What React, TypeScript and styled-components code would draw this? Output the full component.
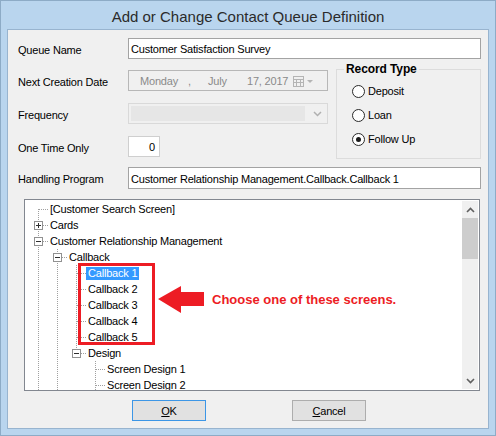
import styled, { createGlobalStyle } from "styled-components";

const GlobalStyle = createGlobalStyle`
  html, body {
    margin: 0;
    padding: 0;
    background: #b9d5ee;
  }
  body {
    font-family: "Liberation Sans", Arial, sans-serif;
    font-size: 11px;
    letter-spacing: -0.2px;
    color: #000;
  }
`;

type TreeNode = {
  label: string;
  depth: number;
  guides: boolean[];
  expander?: "+" | "-";
  first?: boolean;
  last?: boolean;
  selected?: boolean;
};

const treeRows: TreeNode[] = [
  { label: "[Customer Search Screen]", depth: 0, guides: [], first: true },
  { label: "Cards", depth: 0, guides: [], expander: "+" },
  { label: "Customer Relationship Management", depth: 0, guides: [], expander: "-" },
  { label: "Callback", depth: 1, guides: [true], expander: "-" },
  { label: "Callback 1", depth: 2, guides: [true, true], selected: true },
  { label: "Callback 2", depth: 2, guides: [true, true] },
  { label: "Callback 3", depth: 2, guides: [true, true] },
  { label: "Callback 4", depth: 2, guides: [true, true] },
  { label: "Callback 5", depth: 2, guides: [true, true] },
  { label: "Design", depth: 2, guides: [true, true], expander: "-", last: true },
  { label: "Screen Design 1", depth: 3, guides: [true, true, false] },
  { label: "Screen Design 2", depth: 3, guides: [true, true, false] },
];

const DOT = "#a0a0a0";

const Guide = ({ on }: { on: boolean }) => (
  <Cell width="19" height="16">
    {on && (
      <line x1="9.5" y1="0" x2="9.5" y2="16" stroke={DOT} strokeDasharray="1 1" shapeRendering="crispEdges" />
    )}
  </Cell>
);

const Connector = ({ node }: { node: TreeNode }) => (
  <Cell width="19" height="16">
    <line
      x1="9.5"
      y1={node.first ? 8 : 0}
      x2="9.5"
      y2={node.last ? 8 : 16}
      stroke={DOT}
      strokeDasharray="1 1"
      shapeRendering="crispEdges"
    />
    <line
      x1={node.expander ? 14 : 10}
      y1="8.5"
      x2="19"
      y2="8.5"
      stroke={DOT}
      strokeDasharray="1 1"
      shapeRendering="crispEdges"
    />
    {node.expander && (
      <g shapeRendering="crispEdges">
        <rect x="5.5" y="4.5" width="8" height="8" fill="#fff" stroke="#919191" />
        <line x1="7" y1="8.5" x2="12" y2="8.5" stroke="#2f2f2f" />
        {node.expander === "+" && <line x1="9.5" y1="6" x2="9.5" y2="11" stroke="#2f2f2f" />}
      </g>
    )}
  </Cell>
);

const Chevron = ({ up }: { up?: boolean }) => (
  <svg width="9" height="6" viewBox="0 0 9 6">
    <path d={up ? "M1 5 L4.5 1.5 L8 5" : "M1 1 L4.5 4.5 L8 1"} fill="none" stroke="#606060" strokeWidth="1.6" />
  </svg>
);

const App = () => {
  return (
    <>
      <GlobalStyle />
      <Window>
        <TitleBar>Add or Change Contact Queue Definition</TitleBar>
        <Client>
          <FieldRow>
            <Label>Queue Name</Label>
            <TextBox>Customer Satisfaction Survey</TextBox>
          </FieldRow>

          <Middle>
            <LeftColumn>
              <FieldRow>
                <Label>Next Creation Date</Label>
                <DateBox>
                  <DateSeg $w={48}>Monday</DateSeg>
                  <DateSeg $w={20}>,</DateSeg>
                  <DateSeg $w={39}>July</DateSeg>
                  <DateSeg $w={46}>17, 2017</DateSeg>
                  <svg width="22" height="11" viewBox="0 0 22 11">
                    <g fill="none" stroke="#b4b4b4" shapeRendering="crispEdges">
                      <rect x="0.5" y="0.5" width="10" height="10" />
                      <line x1="0" y1="3.5" x2="11" y2="3.5" />
                      <line x1="0" y1="6.5" x2="11" y2="6.5" />
                      <line x1="3.5" y1="3" x2="3.5" y2="11" />
                      <line x1="7.5" y1="3" x2="7.5" y2="11" />
                    </g>
                    <path d="M14 4 L20 4 L17 7 Z" fill="#b4b4b4" />
                  </svg>
                </DateBox>
              </FieldRow>
              <FieldRow>
                <Label>Frequency</Label>
                <ComboBox>
                  <ComboFill />
                  <svg width="9" height="6" viewBox="0 0 9 6">
                    <path d="M1 1 L4.5 4.5 L8 1" fill="none" stroke="#b0b0b0" strokeWidth="1.5" />
                  </svg>
                </ComboBox>
              </FieldRow>
              <FieldRow>
                <Label>One Time Only</Label>
                <NumberBox>0</NumberBox>
              </FieldRow>
            </LeftColumn>

            <GroupBox>
              <GroupTitle>Record Type</GroupTitle>
              <RadioList>
                <RadioRow>
                  <RadioCircle />
                  Deposit
                </RadioRow>
                <RadioRow>
                  <RadioCircle />
                  Loan
                </RadioRow>
                <RadioRow>
                  <RadioCircle $checked />
                  Follow Up
                </RadioRow>
              </RadioList>
            </GroupBox>
          </Middle>

          <HandlingRow>
            <Label>Handling Program</Label>
            <TextBox>Customer Relationship Management.Callback.Callback 1</TextBox>
          </HandlingRow>

          <Tree>
            <TreeList>
              {treeRows.map((node) => (
                <TreeRow key={node.label}>
                  {node.guides.map((on, i) => (
                    <Guide key={i} on={on} />
                  ))}
                  <Connector node={node} />
                  <NodeLabel $selected={node.selected}>{node.label}</NodeLabel>
                </TreeRow>
              ))}
            </TreeList>
            <ScrollBar>
              <ScrollArrow>
                <Chevron up />
              </ScrollArrow>
              <ScrollThumb />
              <ScrollTrack />
              <ScrollArrow>
                <Chevron />
              </ScrollArrow>
            </ScrollBar>

            <HighlightBox />
            <Callout>
              <svg width="46" height="27" viewBox="0 0 46 27">
                <path d="M0 13 L23 0 L23 6 L46 6 L46 20 L23 20 L23 27 Z" fill="#ed1c24" />
              </svg>
              <CalloutText>Choose one of these screens.</CalloutText>
            </Callout>
          </Tree>

          <ButtonBar>
            <Button $default>
              <u>O</u>K
            </Button>
            <Button>
              <u>C</u>ancel
            </Button>
          </ButtonBar>
        </Client>
      </Window>
    </>
  );
};

export default App;

const Window = styled.div`
  width: 496px;
  height: 436px;
  box-sizing: border-box;
  border: 1px solid #8dabc6;
  background: #b9d5ee;
  padding: 0 6px 6px;
  display: flex;
  flex-direction: column;
`;

const TitleBar = styled.div`
  height: 28px;
  display: flex;
  align-items: center;
  justify-content: center;
  padding-top: 2px;
  box-sizing: border-box;
  font-size: 15px;
  letter-spacing: 0;
  color: #2b2b2b;
`;

const Client = styled.div`
  flex: 1;
  border: 1px solid #98b4cf;
  background: #f0f0f0;
  padding: 8px 7px 0 10px;
  display: flex;
  flex-direction: column;
`;

const FieldRow = styled.div`
  display: grid;
  grid-template-columns: 110px 1fr;
  align-items: center;
  height: 21px;
`;

const HandlingRow = styled(FieldRow)`
  margin-top: 8px;
  height: 22px;
`;

const Label = styled.span`
  white-space: nowrap;
  padding-top: 2px;
`;

const TextBox = styled.div`
  height: 100%;
  box-sizing: border-box;
  border: 1px solid #a3a3a3;
  background: #fff;
  padding: 1px 2px 0;
  display: flex;
  align-items: center;
  white-space: nowrap;
`;

const Middle = styled.div`
  display: flex;
  gap: 8px;
  margin-top: 3px;
  align-items: flex-start;
`;

const LeftColumn = styled.div`
  width: 310px;
  padding-top: 8px;
  display: flex;
  flex-direction: column;
  gap: 12px;
`;

const DateBox = styled(TextBox)`
  border-color: #b7b7b7;
  background: #f0f0f0;
  color: #8a8a8a;
  padding-left: 11px;
`;

const DateSeg = styled.span<{ $w: number }>`
  width: ${(p) => p.$w}px;
  flex: none;
`;

const ComboBox = styled.div`
  height: 100%;
  box-sizing: border-box;
  border: 1px solid #d9d9d9;
  background: #f0f0f0;
  padding: 2px 5px 2px 2px;
  display: flex;
  align-items: center;
  gap: 8px;
`;

const ComboFill = styled.div`
  flex: 1;
  align-self: stretch;
  background: #e6e6e6;
`;

const NumberBox = styled(TextBox)`
  width: 32px;
  border-color: #cfcfcf;
  justify-content: flex-end;
  padding-right: 4px;
`;

const GroupBox = styled.fieldset`
  width: 145px;
  height: 97px;
  box-sizing: border-box;
  margin: 0;
  padding: 0 0 0 15px;
  border: 1px solid #dcdcdc;
  min-width: 0;
`;

const GroupTitle = styled.legend`
  margin-left: -8px;
  padding: 0 2px;
  font-weight: bold;
  font-size: 12px;
  letter-spacing: -0.1px;
  line-height: 14px;
`;

const RadioList = styled.div`
  padding-top: 3px;
  display: flex;
  flex-direction: column;
`;

const RadioRow = styled.div`
  height: 24px;
  display: flex;
  align-items: center;
  gap: 3px;
`;

const RadioCircle = styled.span<{ $checked?: boolean }>`
  width: 13px;
  height: 13px;
  box-sizing: border-box;
  border: 1px solid #2a2a2a;
  border-radius: 50%;
  background: #fff;
  display: flex;
  align-items: center;
  justify-content: center;
  &::after {
    content: "";
    width: 5px;
    height: 5px;
    border-radius: 50%;
    background: ${(p) => (p.$checked ? "#1a1a1a" : "transparent")};
  }
`;

const Tree = styled.div`
  position: relative;
  margin: 10px 1px 0 6px;
  height: 192px;
  box-sizing: border-box;
  border: 1px solid #828790;
  background: #fff;
  display: flex;
  overflow: hidden;
`;

const TreeList = styled.div`
  flex: 1;
  padding: 1px 0 0 4px;
`;

const TreeRow = styled.div`
  height: 16px;
  display: flex;
  align-items: center;
`;

const Cell = styled.svg`
  flex: none;
  display: block;
`;

const NodeLabel = styled.span<{ $selected?: boolean }>`
  height: 13px;
  line-height: 13px;
  padding: 0 2px;
  white-space: nowrap;
  background: ${(p) => (p.$selected ? "#3399ff" : "transparent")};
  color: ${(p) => (p.$selected ? "#fff" : "#000")};
`;

const ScrollBar = styled.div`
  width: 16px;
  margin: 1px 1px 1px 0;
  background: #f0f0f0;
  display: flex;
  flex-direction: column;
`;

const ScrollArrow = styled.div`
  height: 17px;
  display: flex;
  align-items: center;
  justify-content: center;
`;

const ScrollThumb = styled.div`
  height: 41px;
  background: #cdcdcd;
`;

const ScrollTrack = styled.div`
  flex: 1;
`;

const HighlightBox = styled.div`
  position: absolute;
  left: 53px;
  top: 63px;
  width: 77px;
  height: 82px;
  box-sizing: border-box;
  border: 3px solid #ed1c24;
`;

const Callout = styled.div`
  position: absolute;
  left: 133px;
  top: 86px;
  display: flex;
  align-items: center;
  gap: 8px;
`;

const CalloutText = styled.span`
  font-size: 13px;
  font-weight: bold;
  letter-spacing: 0;
  color: #ed1c24;
  white-space: nowrap;
`;

const ButtonBar = styled.div`
  margin-top: 9px;
  display: flex;
  justify-content: center;
  gap: 86px;
  padding-right: 1px;
`;

const Button = styled.div<{ $default?: boolean }>`
  width: 74px;
  height: 21px;
  box-sizing: border-box;
  border: 1px solid ${(p) => (p.$default ? "#3c96e6" : "#adadad")};
  background: #e1e1e1;
  display: flex;
  align-items: center;
  justify-content: center;
  padding-top: 1px;
`;
